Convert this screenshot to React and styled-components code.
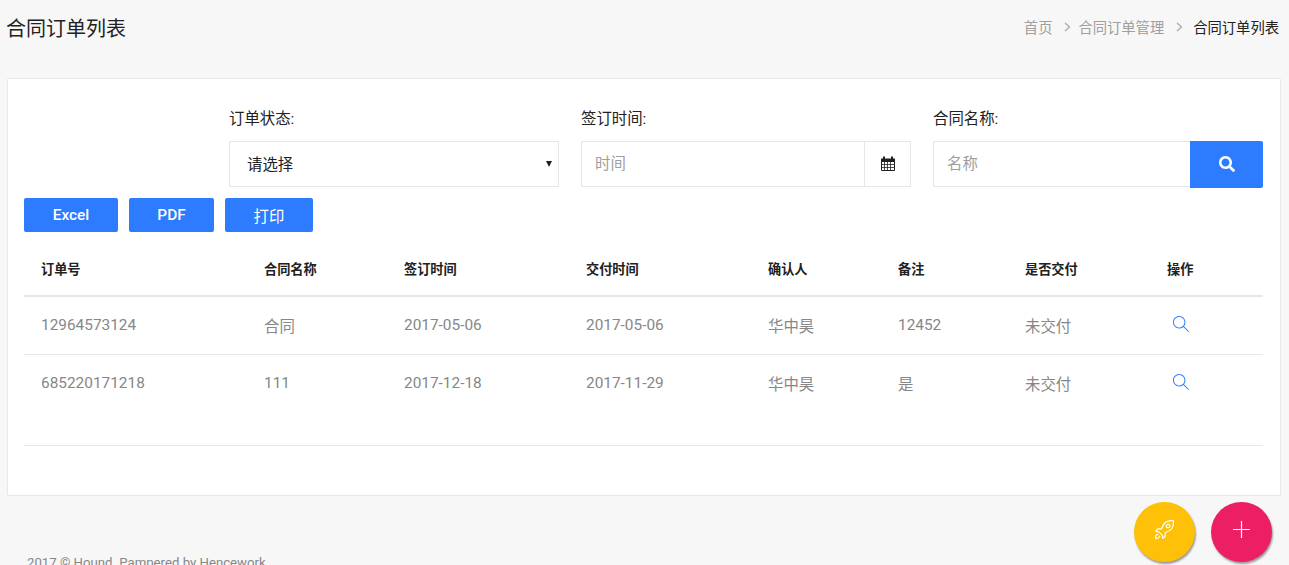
import React from 'react';
import styled, { createGlobalStyle } from 'styled-components';
import { FaSearch } from 'react-icons/fa';
import { SlMagnifier, SlRocket } from 'react-icons/sl';

const GlobalStyle = createGlobalStyle`
  html, body {
    margin: 0;
    height: 100%;
    overflow: hidden;
    background: #f7f7f7;
  }
  * { box-sizing: border-box; }
  body {
    font-family: Roboto, "Noto Sans CJK SC", sans-serif;
    font-size: 15.4px;
    color: #212121;
  }
`;

const Page = styled.div`
  position: relative;
  height: 565px;
  overflow: hidden;
  padding: 0 8px 0 7px;
`;

const Header = styled.div`
  display: flex;
  justify-content: space-between;
  align-items: center;
  height: 54px;
  margin-bottom: 24px;
`;

const Title = styled.h4`
  margin: 0 0 0 -1px;
  font-size: 20px;
  font-weight: 400;
  color: #212121;
`;

const Breadcrumb = styled.div`
  display: flex;
  align-items: center;
  font-size: 14.3px;
  padding: 0 2px 2px 0;
`;

const Crumb = styled.span`
  color: ${(p) => (p.$active ? '#212121' : '#9e9e9e')};
`;

const CrumbSep = styled.svg`
  width: 7px;
  height: 10px;
  margin: 1px ${(p) => p.$right}px 0 12px;
  fill: none;
  stroke: #a8a8a8;
  stroke-width: 1.2;
`;

const Card = styled.div`
  height: 418px;
  background: #fff;
  border: 1px solid #e8e8e8;
  border-radius: 2px;
  padding: 0 17px 0 16px;
`;

const Filters = styled.div`
  display: flex;
  justify-content: flex-end;
  gap: 22px;
  padding-top: 29px;
`;

const Field = styled.div`
  width: 330px;
`;

const Label = styled.div`
  font-size: 15.4px;
  line-height: 22px;
  margin-bottom: 11px;
  color: #212121;
`;

const SelectWrap = styled.div`
  position: relative;
  height: 46px;

  &::after {
    content: '';
    position: absolute;
    right: 7px;
    top: 20px;
    border-left: 3.5px solid transparent;
    border-right: 3.5px solid transparent;
    border-top: 6px solid #212121;
  }
`;

const Select = styled.select`
  appearance: none;
  width: 100%;
  height: 100%;
  border: 1px solid #e6e6e6;
  border-radius: 0;
  background: #fff;
  padding: 2px 17px 0;
  font: inherit;
  color: #212121;
  outline: none;
`;

const InputGroup = styled.div`
  display: flex;
  height: 46px;
`;

const Input = styled.input`
  flex: 1;
  min-width: 0;
  height: 100%;
  border: 1px solid #e6e6e6;
  border-right: ${(p) => (p.$joined ? 'none' : '1px solid #e6e6e6')};
  padding: 0 13px;
  font: inherit;
  color: #212121;
  outline: none;

  &::placeholder {
    color: #9e9e9e;
    opacity: 1;
  }
`;

const Addon = styled.div`
  width: 46px;
  display: flex;
  align-items: center;
  justify-content: center;
  border: 1px solid #e6e6e6;
  border-left: none;
  color: #212121;
`;

const SearchButton = styled.button`
  width: 73px;
  height: 47px;
  display: flex;
  align-items: center;
  justify-content: center;
  border: none;
  border-radius: 0 2px 2px 0;
  background: #2d7bff;
  color: #fff;
  padding: 0 0 2px;
  font-size: 16px;
`;

const Toolbar = styled.div`
  display: flex;
  gap: 11px;
  margin-top: 11px;
`;

const ExportButton = styled.button`
  width: ${(p) => p.$width}px;
  height: 34px;
  border: none;
  border-radius: 2px;
  background: #2d7bff;
  color: #fff;
  font: inherit;
  font-weight: ${(p) => p.$weight};
  padding: 0;
`;

const TableWrap = styled.div`
  height: 214px;
  border-bottom: 1px solid #e8e8e8;
`;

const Table = styled.table`
  width: 100%;
  border-collapse: collapse;
  table-layout: fixed;
`;

const Th = styled.th`
  height: 64px;
  padding: 9px 0 0 17px;
  text-align: left;
  font-size: 13.2px;
  font-weight: 700;
  color: #212121;
  border-bottom: 2px solid #e6e6e6;
`;

const Td = styled.td`
  height: 58px;
  padding: 0 0 0 17px;
  font-size: 15.4px;
  color: #878787;
  border-bottom: ${(p) => (p.$last ? 'none' : '1px solid #e8e8e8')};
`;

const ViewIcon = styled(SlMagnifier)`
  display: block;
  margin: -3px 0 0 6px;
  color: #2d7bff;
  font-size: 16px;
`;

const Footer = styled.div`
  margin-top: 58px;
  padding-left: 20px;
  font-size: 13.2px;
  line-height: 18px;
  color: #878787;
`;

const Fab = styled.button`
  position: absolute;
  top: 502px;
  left: ${(p) => p.$left}px;
  width: 61px;
  height: 60px;
  border: none;
  border-radius: 50%;
  background: ${(p) => p.$bg};
  color: #fff;
  padding: 0 0 6px;
  display: flex;
  align-items: center;
  justify-content: center;
  box-shadow: 1px 2px 2px rgba(0, 0, 0, 0.38);
`;

const columns = [223, 140, 182, 182, 130, 127, 142, 113];
const heads = ['订单号', '合同名称', '签订时间', '交付时间', '确认人', '备注', '是否交付', '操作'];
const rows = [
  ['12964573124', '合同', '2017-05-06', '2017-05-06', '华中昊', '12452', '未交付'],
  ['685220171218', '111', '2017-12-18', '2017-11-29', '华中昊', '是', '未交付'],
];

const CalendarIcon = () => (
  <svg width="14" height="15" viewBox="0 0 14 15" style={{ marginTop: -2 }}>
    <path d="M0.5 3.5h13v11h-13z" fill="none" stroke="#212121" />
    <path d="M0 2.5h14v3.5H0z" fill="#212121" />
    <path d="M3 0.5v2.5M11 0.5v2.5" stroke="#212121" strokeWidth="2" />
    <path d="M3.5 6v8M6.5 6v8M9.5 6v8M1 8.5h12M1 11.5h12" stroke="#212121" strokeWidth="0.8" />
  </svg>
);

const PlusIcon = () => (
  <svg width="17" height="17" viewBox="0 0 17 17">
    <path d="M8.5 0v17M0 8.5h17" stroke="#fff" strokeWidth="1.2" />
  </svg>
);

const Sep = ({ right }) => (
  <CrumbSep $right={right} viewBox="0 0 7 10">
    <path d="M1 1l4.5 4-4.5 4" />
  </CrumbSep>
);

export default function App() {
  return (
    <Page>
      <GlobalStyle />
      <Header>
        <Title>合同订单列表</Title>
        <Breadcrumb>
          <Crumb>首页</Crumb>
          <Sep right={7} />
          <Crumb>合同订单管理</Crumb>
          <Sep right={10} />
          <Crumb $active>合同订单列表</Crumb>
        </Breadcrumb>
      </Header>

      <Card>
        <Filters>
          <Field>
            <Label>订单状态:</Label>
            <SelectWrap>
              <Select defaultValue="">
                <option value="">请选择</option>
              </Select>
            </SelectWrap>
          </Field>
          <Field>
            <Label>签订时间:</Label>
            <InputGroup>
              <Input placeholder="时间" />
              <Addon>
                <CalendarIcon />
              </Addon>
            </InputGroup>
          </Field>
          <Field>
            <Label>合同名称:</Label>
            <InputGroup>
              <Input $joined placeholder="名称" />
              <SearchButton>
                <FaSearch />
              </SearchButton>
            </InputGroup>
          </Field>
        </Filters>

        <Toolbar>
          <ExportButton $width={94} $weight={500}>Excel</ExportButton>
          <ExportButton $width={85} $weight={500}>PDF</ExportButton>
          <ExportButton $width={88} $weight={400}>打印</ExportButton>
        </Toolbar>

        <TableWrap>
          <Table>
            <colgroup>
              {columns.map((w, i) => (
                <col key={i} width={w} />
              ))}
            </colgroup>
            <thead>
              <tr>
                {heads.map((h) => (
                  <Th key={h}>{h}</Th>
                ))}
              </tr>
            </thead>
            <tbody>
              {rows.map((row, r) => (
                <tr key={r}>
                  {row.map((cell, c) => (
                    <Td key={c} $last={r === rows.length - 1}>
                      {cell}
                    </Td>
                  ))}
                  <Td $last={r === rows.length - 1}>
                    <ViewIcon />
                  </Td>
                </tr>
              ))}
            </tbody>
          </Table>
        </TableWrap>
      </Card>

      <Footer>2017 © Hound. Pampered by Hencework</Footer>

      <Fab $left={1134} $bg="#ffc107">
        <SlRocket size={19} />
      </Fab>
      <Fab $left={1211} $bg="#ec1f64">
        <PlusIcon />
      </Fab>
    </Page>
  );
}
